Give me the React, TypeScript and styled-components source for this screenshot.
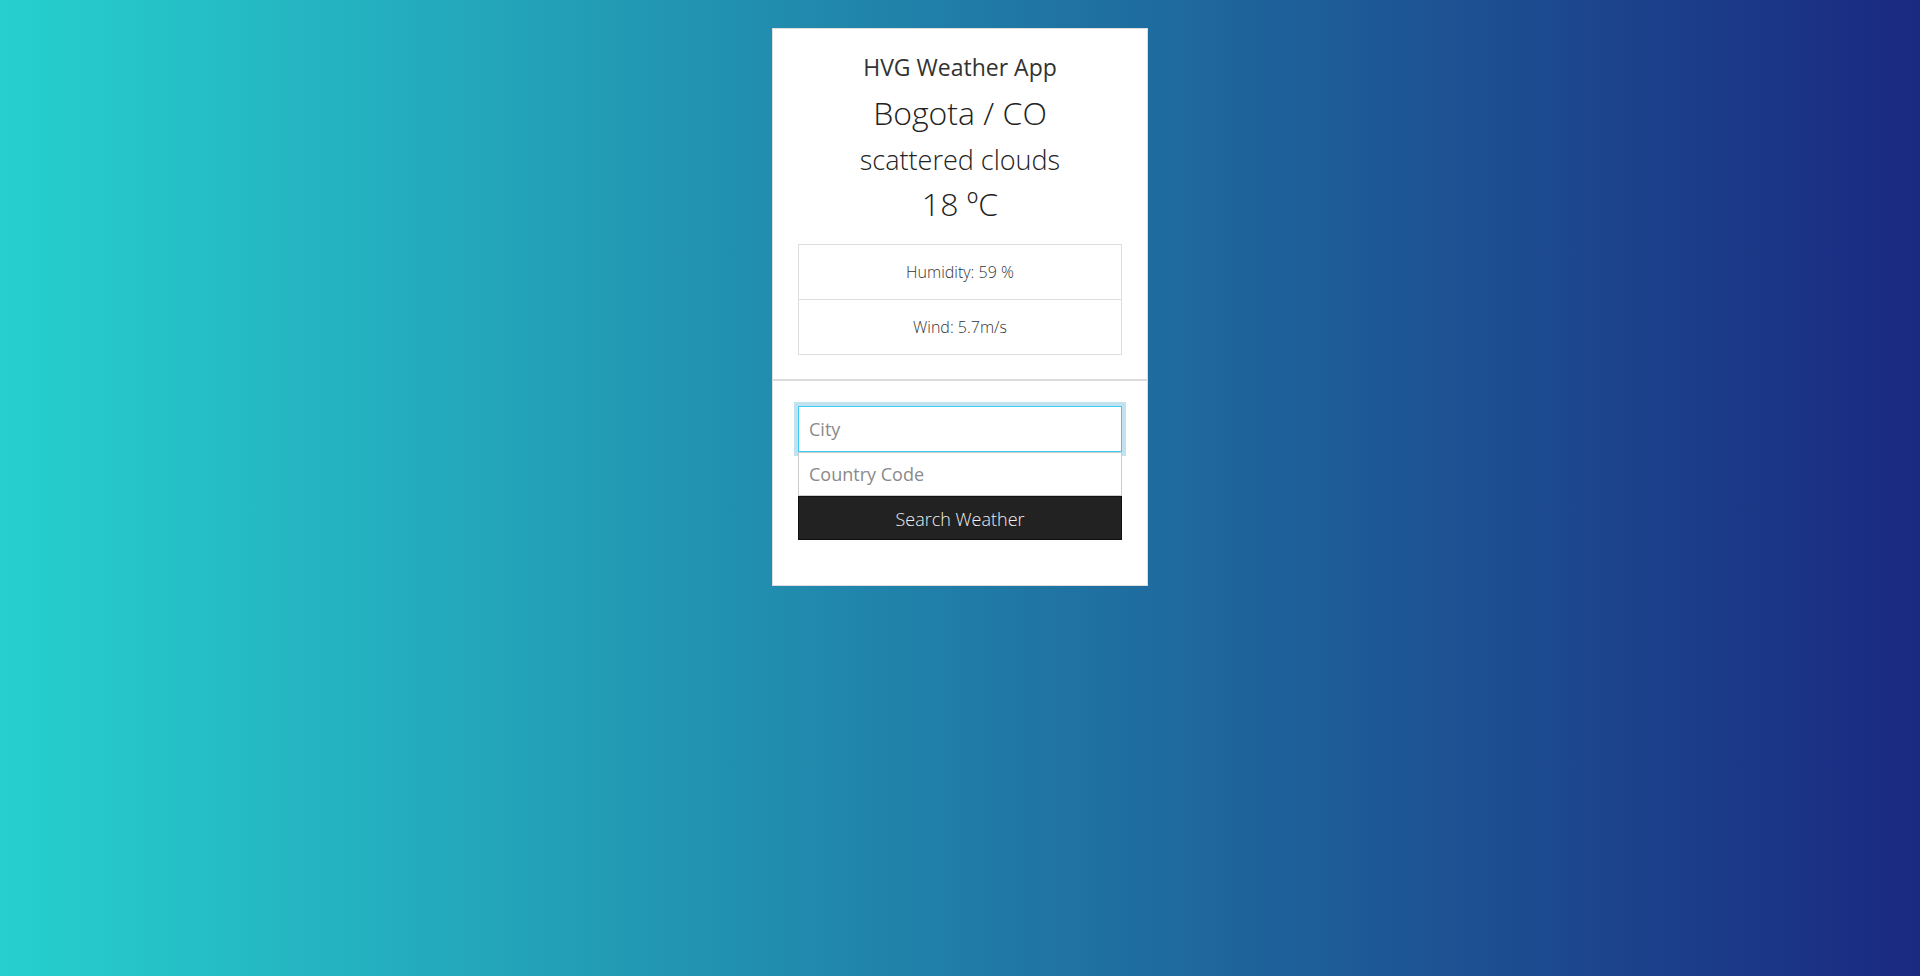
import React from "react";
import styled, { createGlobalStyle } from "styled-components";

const GlobalStyle = createGlobalStyle`
  html, body {
    margin: 0;
    padding: 0;
  }
  body {
    font-family: "Open Sans", "Liberation Sans", sans-serif;
    background: linear-gradient(to right, #26d0ce, #1a2980);
    min-height: 100vh;
  }
  * { box-sizing: border-box; }
`;

const Page = styled.main`
  min-height: 100vh;
  display: flex;
  justify-content: center;
  align-items: flex-start;
  padding-top: 28px;
`;

const Card = styled.section`
  width: 376px;
  background: #fff;
  border: 1px solid #ddd;
  display: flex;
  flex-direction: column;
`;

const CardBody = styled.div`
  padding: 23px 25px 24px;
  display: flex;
  flex-direction: column;
  align-items: stretch;
  text-align: center;
  color: #222;
`;

const Line = styled.div<{ $size: number; $lh: number; $weight: number; $mt: number; $color?: string }>`
  font-size: ${(p) => p.$size}px;
  line-height: ${(p) => p.$lh}px;
  font-weight: ${(p) => p.$weight};
  margin-top: ${(p) => p.$mt}px;
  color: ${(p) => p.$color ?? "#222"};
  white-space: nowrap;
`;

const List = styled.ul`
  list-style: none;
  margin: 20px 0 0;
  padding: 0;
  border: 1px solid #ddd;
`;

const ListItem = styled.li`
  padding: 15px;
  font-size: 16px;
  line-height: 24px;
  font-weight: 300;
  color: #333;
  text-align: center;
  & + & {
    border-top: 1px solid #ddd;
  }
`;

const Footer = styled.form`
  border-top: 2px solid #ddd;
  padding: 25px 25px 45px;
  display: flex;
  flex-direction: column;
`;

const Field = styled.input<{ $focused?: boolean; $h: number }>`
  display: block;
  width: 100%;
  height: ${(p) => p.$h}px;
  margin: 0;
  padding: 0 10px;
  font-family: "Open Sans", "Liberation Sans", sans-serif;
  font-size: 18px;
  font-weight: 400;
  color: #333;
  background: #fff;
  border: 1px solid ${(p) => (p.$focused ? "#3ccbf4" : "#ccc")};
  border-radius: 0;
  outline: none;
  box-shadow: ${(p) => (p.$focused ? "0 0 0 4px #c0e3ef" : "none")};
  &::placeholder {
    color: #8a8a8a;
    font-weight: 400;
  }
  &:focus {
    border-color: #3ccbf4;
    box-shadow: 0 0 0 4px #c0e3ef;
  }
`;

const SubmitButton = styled.button`
  display: block;
  width: 100%;
  height: 44px;
  margin: 0;
  padding: 1px 0 0;
  border: 1px solid #111;
  border-radius: 0;
  background: #222;
  color: #eee;
  font-family: "Open Sans", "Liberation Sans", sans-serif;
  font-size: 18px;
  font-weight: 300;
  cursor: pointer;
`;

export default function App() {
  return (
    <>
      <GlobalStyle />
      <Page>
        <Card>
          <CardBody>
            <Line $size={23} $lh={30} $weight={400} $mt={0} $color="#333">
              HVG Weather App
            </Line>
            <Line $size={32} $lh={40} $weight={300} $mt={11}>
              Bogota / CO
            </Line>
            <Line $size={27} $lh={34} $weight={300} $mt={10}>
              scattered clouds
            </Line>
            <Line $size={32} $lh={40} $weight={300} $mt={7}>
              18 ºC
            </Line>
            <List>
              <ListItem>Humidity: 59 %</ListItem>
              <ListItem>Wind: 5.7m/s</ListItem>
            </List>
          </CardBody>
          <Footer onSubmit={(e) => e.preventDefault()}>
            <Field $focused $h={46} type="text" placeholder="City" autoFocus />
            <Field $h={44} type="text" placeholder="Country Code" />
            <SubmitButton type="submit">Search Weather</SubmitButton>
          </Footer>
        </Card>
      </Page>
    </>
  );
}
